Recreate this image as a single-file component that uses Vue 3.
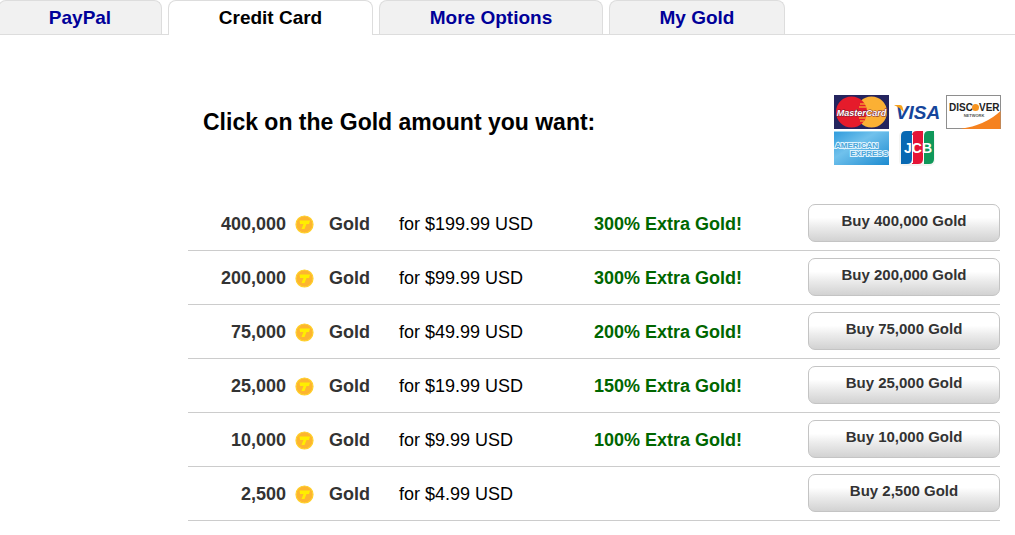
<script setup>
const tabs = [
  { label: 'PayPal', name: 'paypal' },
  { label: 'Credit Card', name: 'card', active: true },
  { label: 'More Options', name: 'more' },
  { label: 'My Gold', name: 'mine' },
]

const offers = [
  { amount: '400,000', price: '$199.99', extra: '300%' },
  { amount: '200,000', price: '$99.99', extra: '300%' },
  { amount: '75,000', price: '$49.99', extra: '200%' },
  { amount: '25,000', price: '$19.99', extra: '150%' },
  { amount: '10,000', price: '$9.99', extra: '100%' },
  { amount: '2,500', price: '$4.99', extra: '' },
]
</script>

<template>
  <div class="page">
    <nav class="tabs">
      <a
        v-for="tab in tabs"
        :key="tab.name"
        href="#"
        class="tab"
        :class="[tab.name, { active: tab.active }]"
        :aria-current="tab.active ? 'page' : undefined"
        >{{ tab.label }}</a
      >
    </nav>

    <main class="content">
      <header class="intro">
        <h1>Click on the Gold amount you want:</h1>
        <svg class="cards" width="168" height="71" viewBox="0 0 168 71" role="img" aria-label="MasterCard, Visa, Discover, American Express, JCB">
          <defs>
            <linearGradient id="amex" x1="0" y1="0" x2="1" y2="1">
              <stop offset="0" stop-color="#2f9bdc" />
              <stop offset="0.4" stop-color="#70c1ec" />
              <stop offset="1" stop-color="#1d8bd0" />
            </linearGradient>
          </defs>
          <!-- MasterCard -->
          <rect width="55" height="34" fill="#24245e" />
          <circle cx="37.500" cy="17" r="15.500" fill="#fbb034" />
          <circle cx="17.500" cy="17" r="15.500" fill="#e51b2b" />
          <path d="M26 9h5M25 12h7M25 23h7M26 26h4" stroke="#f49a2c" stroke-width="1.500" />
          <text x="27.500" y="21" text-anchor="middle" class="mc">MasterCard</text>
          <!-- Visa -->
          <text x="84" y="24" text-anchor="middle" class="visa">VISA</text>
          <path d="M60 10h6q2 0 2.500 2l1.500 6q-3-5-10-8z" fill="#f5a11c" />
          <!-- Discover -->
          <rect x="112.500" y="0.500" width="54" height="33" fill="#fff" stroke="#8e8e8e" />
          <path d="M126 34q26-4 40.500-18v18z" fill="#f58220" />
          <text x="115" y="16" class="discover">DISC</text>
          <circle cx="141.500" cy="12.500" r="3.500" fill="#f79420" />
          <text x="145" y="16" class="discover">VER</text>
          <text x="140" y="22" text-anchor="middle" class="network">NETWORK</text>
          <!-- American Express -->
          <rect y="36" width="55" height="34" fill="url(#amex)" />
          <path d="M0 36.500h55" stroke="#9bd6f3" />
          <text x="1" y="53" class="amex">AMERICAN</text>
          <text x="54" y="61" text-anchor="end" class="amex">EXPRESS</text>
          <!-- JCB -->
          <rect x="65" y="36" width="36" height="35" rx="5" fill="#f5f5f3" />
          <path d="M72 36h6v28q0 5-5 5h-6V41q0-5 5-5z" fill="#0869b3" />
          <path d="M83 36h6v28q0 5-5 5h-6V41q0-5 5-5z" fill="#e51437" />
          <path d="M95 36h5v28q0 5-5 5h-5V41q0-5 5-5z" fill="#10985a" />
          <path d="M78.500 40v28M89.500 40v28" stroke="#fff" />
          <text x="84" y="58" text-anchor="middle" class="jcb">JCB</text>
        </svg>
      </header>

      <table class="offers">
        <tbody>
          <tr v-for="offer in offers" :key="offer.amount">
            <td class="amount">{{ offer.amount }}</td>
            <td class="coin">
              <svg width="20" height="20" viewBox="0 0 20 20" aria-hidden="true">
                <circle cx="9.500" cy="10.500" r="8.500" fill="#fdb52f" stroke="#ffd02a" stroke-width="1.200" />
                <path d="M4.500 6.500h10.500l-1 3.500h-2.500l-2 5H6.500l2-5H5z" fill="#ffee00" />
              </svg>
            </td>
            <td class="unit">Gold</td>
            <td class="price">for {{ offer.price }} USD</td>
            <td class="extra"><template v-if="offer.extra">{{ offer.extra }} Extra Gold!</template></td>
            <td class="action"><button type="button">Buy {{ offer.amount }} Gold</button></td>
          </tr>
        </tbody>
      </table>
    </main>
  </div>
</template>

<style>
body {
  margin: 0;
  background: #fff;
}
</style>

<style scoped>
.page {
  font-family: "Liberation Sans", Arial, sans-serif;
  font-size: 18px;
  line-height: 20px;
  color: #000;
}
.tabs {
  display: flex;
  gap: 6px;
  height: 34px;
  border-bottom: 1px solid #ddd;
}
.tab {
  box-sizing: border-box;
  height: 34px;
  padding-top: 7px;
  border: 1px solid #ddd;
  border-bottom: 0;
  border-radius: 8px 8px 0 0;
  background: #f1f1f1;
  color: #009;
  font-size: 19px;
  font-weight: bold;
  text-align: center;
  text-decoration: none;
}
.tab.active {
  height: 35px;
  background: #fff;
  color: #000;
}
.paypal {
  width: 164px;
  margin-left: -2px;
}
.card {
  width: 205px;
}
.more {
  width: 224px;
}
.mine {
  width: 176px;
}
.content {
  padding: 60px 15px 0 188px;
}
.intro {
  display: flex;
  justify-content: space-between;
  align-items: flex-start;
  height: 102px;
  padding-left: 15px;
}
h1 {
  margin: 14px 0 0;
  font-size: 23px;
  line-height: 26px;
}
.cards {
  flex: none;
  margin-right: -2px;
}
.cards text {
  font-family: "Liberation Sans", Arial, sans-serif;
  font-weight: bold;
}
.cards .mc {
  font-size: 9px;
  font-style: italic;
  fill: #fff;
  stroke: #7a1a30;
  stroke-width: 1px;
  paint-order: stroke;
}
.cards .visa {
  font-size: 19px;
  font-style: italic;
  fill: #15459b;
}
.cards .discover {
  font-size: 10px;
  fill: #222;
}
.cards .network {
  font-size: 4px;
  fill: #555;
}
.cards .amex {
  font-size: 8px;
  fill: #4aa6da;
  stroke: #dff3fd;
  stroke-width: 2px;
  paint-order: stroke;
}
.cards .jcb {
  font-size: 14px;
  fill: #fff;
}
.offers {
  width: 100%;
  border-collapse: separate;
  border-spacing: 0;
  table-layout: fixed;
}
td {
  height: 53px;
  padding: 0;
  border-bottom: 1px solid #ccc;
  vertical-align: middle;
}
.amount {
  width: 98px;
  text-align: right;
}
.amount,
.unit {
  font-weight: bold;
  color: #333;
}
.coin {
  width: 43px;
}
.coin svg {
  display: block;
  margin-left: 9px;
}
.unit {
  width: 70px;
}
.price {
  width: 195px;
}
.extra {
  font-weight: bold;
  color: #060;
}
.action {
  width: 192px;
  padding-bottom: 1px;
  height: 52px;
}
button {
  display: block;
  box-sizing: border-box;
  width: 100%;
  height: 38px;
  padding: 0 0 4px;
  border: 1px solid #c4c4c4;
  border-radius: 7px;
  background: linear-gradient(#fff 0%, #fff 35%, #ececec 60%, #d2d2d2 100%);
  font-family: inherit;
  font-size: 15px;
  font-weight: bold;
  line-height: 18px;
  color: #333;
  cursor: pointer;
}
</style>
